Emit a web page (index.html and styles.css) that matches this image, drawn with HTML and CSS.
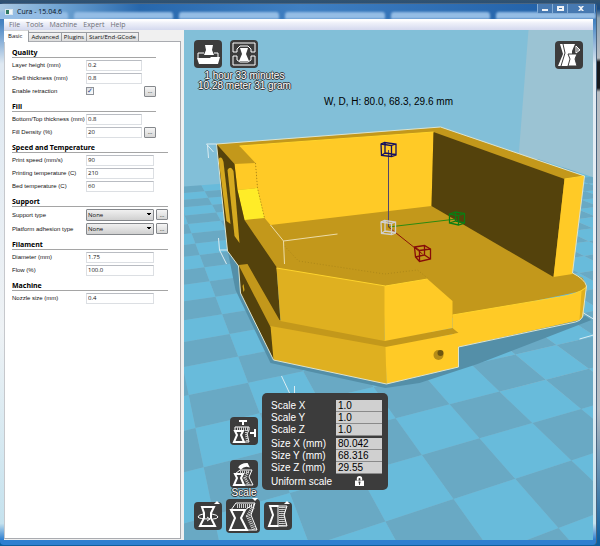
FILE: index.html
```
<!DOCTYPE html>
<html lang="en">
<head>
    <meta charset="UTF-8">
    <meta name="viewport" content="width=device-width, initial-scale=1.0">
    <title>Cura - 15.04.6</title>
    <link rel="stylesheet" href="styles.css">
</head>
<body>
    <div class="window">
        <header class="titlebar">
            <div class="behind-tabs" aria-hidden="true">
                <span></span><span></span><span></span><span></span><span></span><span></span>
            </div>
            <span class="app-icon"></span>
            <h1>Cura - 15.04.6</h1>
            <div class="window-buttons">
                <button type="button" aria-label="Minimize"><svg viewBox="0 0 14 10"><path d="M4 5h6v2H4z"/></svg></button>
                <button type="button" aria-label="Maximize"><svg viewBox="0 0 14 10"><path fill-rule="evenodd" d="M4 2h7v5H4zM6 4h3v1H6z"/></svg></button>
                <button type="button" class="close" aria-label="Close"><svg viewBox="0 0 14 10"><path d="M4 2h2l1 1 1-1h2L8 4.500l2 2.500H8L7 6 6 7H4l2-2.500z"/></svg></button>
            </div>
        </header>
        <nav class="menubar">
            <a href="#file">File</a>
            <a href="#tools">Tools</a>
            <a href="#machine">Machine</a>
            <a href="#expert">Expert</a>
            <a href="#help">Help</a>
        </nav>
        <main class="content">
            <aside class="settings">
                <div class="tabs">
                    <button type="button" class="active">Basic</button>
                    <button type="button">Advanced</button>
                    <button type="button">Plugins</button>
                    <button type="button">Start/End-GCode</button>
                </div>
                <form class="tab-page">
                    <section class="narrow">
                        <h2>Quality</h2>
                        <div class="row"><label for="layer">Layer height (mm)</label><input id="layer" type="text" value="0.2"></div>
                        <div class="row"><label for="shell">Shell thickness (mm)</label><input id="shell" type="text" value="0.8"></div>
                        <div class="row"><label for="retract">Enable retraction</label><input id="retract" type="checkbox" checked><button type="button">...</button></div>
                    </section>
                    <section class="narrow">
                        <h2>Fill</h2>
                        <div class="row"><label for="bottom">Bottom/Top thickness (mm)</label><input id="bottom" type="text" value="0.8"></div>
                        <div class="row"><label for="density">Fill Density (%)</label><input id="density" type="text" value="20"><button type="button">...</button></div>
                    </section>
                    <section>
                        <h2>Speed and Temperature</h2>
                        <div class="row"><label for="speed">Print speed (mm/s)</label><input id="speed" type="text" value="90"></div>
                        <div class="row"><label for="temp">Printing temperature (C)</label><input id="temp" type="text" value="210"></div>
                        <div class="row"><label for="bed">Bed temperature (C)</label><input id="bed" type="text" value="60"></div>
                    </section>
                    <section class="selects">
                        <h2>Support</h2>
                        <div class="row"><label for="support">Support type</label><select id="support"><option>None</option></select><button type="button">...</button></div>
                        <div class="row"><label for="adhesion">Platform adhesion type</label><select id="adhesion"><option>None</option></select><button type="button">...</button></div>
                    </section>
                    <section>
                        <h2>Filament</h2>
                        <div class="row"><label for="diameter">Diameter (mm)</label><input id="diameter" type="text" value="1.75"></div>
                        <div class="row"><label for="flow">Flow (%)</label><input id="flow" type="text" value="100.0"></div>
                    </section>
                    <section>
                        <h2>Machine</h2>
                        <div class="row"><label for="nozzle">Nozzle size (mm)</label><input id="nozzle" type="text" value="0.4"></div>
                    </section>
                </form>
            </aside>

            <div class="scene">
                <svg class="view3d" viewBox="184 30 410 510" preserveAspectRatio="xMidYMid slice">
                    <rect class="sky" x="-400" y="-400" width="1600" height="1600"/>
                    <path class="side-wall" d="M529 30H1200V400H500Z"/>
                    <path id="floor-light" class="floor-light"/>
                    <path id="floor-dark" class="floor-dark"/>

                    <path class="shadow" d="M228 250L236 290 271 363 386 388 420 383 478 364 530 344 592 320 586 316 459 344Z"/>

                    <!-- model -->
                    <path class="top" d="M217 144L441 127 585 176 573 273 583 278 587 285 587 290 453 318 385 300 277 272 245 222Z"/>
                    <path class="front" d="M240 146L434 132 432 206 271 225 265 218 258 188 256 163Z"/>
                    <path class="front" d="M235 164L256 163 258 188 238 190Z"/>
                    <path class="bright" d="M238 190L258 188 265 218 245 220Z"/>
                    <path class="inside" d="M434 132L565 179 554 277 432 206Z"/>
                    <path class="front" d="M565 179L585 176 573 274 554 277Z"/>
                    <path class="inside" d="M217 144L235 164 238 190 245 220 277 267 281 322 274 360 241 293 239 266 228 251Z"/>
                    <path class="slot" d="M219 159Q222 155 224 162L231 224 227 221Z"/>
                    <path class="slot" d="M228 170Q231 165 234 171L240 243 235 236Z"/>
                    <path class="slot" d="M243 286L244 284 245 290 244 292Z"/>
                    <path class="front" d="M453 315L560 297Q584 293 587 285L584 315Q583 320 576 321L459 347 453 334Z"/>
                    <path class="left" d="M582 291L587 287 583 317 580 320Z"/>
                    <path class="top" d="M239 265L248 264 280 320 385 340 453 328 459 333 387 348 271 327Z"/>
                    <path class="left" d="M277 268L386 286 385 341 281 321Z"/>
                    <path class="front" d="M385 286L428 279 453 301 453 328 385 341Z"/>
                    <path class="left" d="M271 326L387 347 387 384 274 360Z"/>
                    <path class="front" d="M386 347L459 333 459 367 387 384Z"/>
                    <path class="shine" d="M277 268L386 286 428 279M453 315L560 297Q578 294 586 288M240 146L434 132M565 179L585 176"/>
                    <ellipse cx="439" cy="355" rx="5" ry="5" fill="#b58c18"/>
                    <ellipse cx="441" cy="353" rx="3" ry="3" fill="#6d5510"/>
                    <path class="dots" d="M256 163L258 188 265 218M285 246L299 261 385 274 418 270 428 278"/>
                    <path class="outline" d="M228 251L217 144 441 127 585 176 573 273Q585 279 587 286L583 317Q581 321 576 322L459 347 459 367 387 384 274 360 241 293 239 266Z"/>

                    <!-- bounding box corners -->
                    <path class="corner" d="M217 144H207L214 152M208 145L209 158M219 238L220 250H228M220 250L227 264M282 376L290 393M295 386V395M584 313L594 319M580 339L594 335"/>
                    <path class="corner inner" d="M271 225L284 241 338 234M284 241L285 264"/>

                    <!-- scale handles -->
                    <path d="M389 150V227" stroke="#54466a"/>
                    <path d="M389 227L457 219" stroke="#2c8a10"/>
                    <path d="M389 227L423 254" stroke="#8a1408"/>
                    <g fill="none" stroke-width="1.300">
                        <path stroke="#15105f" d="M381.500 144L385 142.500 396.500 144V155L392 156.500 382 155.500ZM381.500 144L392 145.500V156.500M392 145.500L396.500 144M385.500 143V153L382 155.500M385.500 153L396 154.500"/>
                        <path stroke="#d0d0d0" d="M381.500 222L385 220.500 396 222V233L392 234.500 382 233.500ZM381.500 222L392 223.500V234.500M392 223.500L396 222M385.500 221V231L382 233.500M385.500 231L396 232.500"/>
                        <path stroke="#0b7d13" d="M450 214L456 212 465 213.500V223L459 225 450 223ZM450 214L459 215.500V225M459 215.500L465 213.500M456 212V221L450 223M456 221L465 223"/>
                        <path stroke="#860d09" d="M415 247L425 245.500 431 249V259L420 261.500 416 257ZM415 247L420 250.500V261.500M420 250.500L431 249M425 245.500V255L416 257M425 255L431 259"/>
                    </g>
                </svg>

                <div class="print-tools">
                    <div class="tool-row">
                        <button type="button" class="tool" aria-label="Load">
                            <svg viewBox="0 0 28 28"><path d="M11 5h8l-1 5 2 5H10l2-5z"/><path class="line thin" d="M4 18v-5h6M20 13h4v5"/><path d="M3 18h13l1-1h9l-2 7H5z"/></svg>
                        </button>
                        <button type="button" class="tool" aria-label="Toolpath to file">
                            <svg viewBox="0 0 28 28"><path class="line thin" d="M3 12V3h22v9h-4V9l-3-3h-8L7 9v3zM3 16v9h22v-9h-4v4l-3 2h-8l-3-2v-4z"/><path d="M10 8h8l-2 6 3 7H9l3-7z"/></svg>
                        </button>
                    </div>
                    <p>1 hour 33 minutes<br>10.28 meter 31 gram</p>
                </div>

                <button type="button" class="tool view-mode" aria-label="View mode">
                    <svg viewBox="0 0 28 28"><path d="M5 3h15l-3 7v3l3 4-2 8H3l5-12z"/><path class="cut" d="M8 3l2 9-4 13"/><path class="shape" d="M13 13h9l-2 5 2 7h-9l2-7z"/><path class="line thin" d="M21 5l4 4-4 3zM23 7v3"/></svg>
                </button>

                <p class="dimensions">W, D, H: 80.0, 68.3, 29.6 mm</p>

                <div class="scale-popup">
                    <div class="scale-tools">
                        <button type="button" class="tool" aria-label="To max">
                            <svg viewBox="0 0 28 28"><path class="line" d="M9 4h8M13 4v4M25 12v8M20 16h5"/><path class="line thin" d="M5 14v-4h14v3l-2 4 2 8h-4"/><path class="hatch" d="M7 11.500h11M16.500 13v4l1 8"/><path class="line" d="M5 14h8l-2 4 3 7H4l3-7z"/></svg>
                        </button>
                        <button type="button" class="tool" aria-label="Reset">
                            <svg viewBox="0 0 28 28"><path class="line" d="M9 8q2-4 8-4l1 2q-4-1-8 3"/><path class="line" d="M5 14h8l-2 4 3 7H4l3-7z"/><path class="line thin" d="M5 14l5-4h12l-3 7 4 8h-8"/><path class="hatch" d="M10 12h10M18 12l-3 6 4 7"/></svg>
                        </button>
                        <span class="tool-name">Scale</span>
                    </div>
                    <form class="scale-panel">
                        <label for="sx">Scale X</label><input id="sx" type="text" value="1.0">
                        <label for="sy">Scale Y</label><input id="sy" type="text" value="1.0">
                        <label for="sz">Scale Z</label><input id="sz" type="text" value="1.0">
                        <hr>
                        <label for="mx">Size X (mm)</label><input id="mx" type="text" value="80.042">
                        <label for="my">Size Y (mm)</label><input id="my" type="text" value="68.316">
                        <label for="mz">Size Z (mm)</label><input id="mz" type="text" value="29.55">
                        <span class="uniform">Uniform scale</span>
                        <button type="button" class="lock" aria-label="Uniform scale"><svg viewBox="0 0 10 12"><path fill="none" stroke="#fff" stroke-width="2" d="M3 5V3q0-2 2-2t2 2v2"/><path fill="#fff" d="M0 5h10v6H0z"/><path fill="#3c3c3c" d="M4 6h2v2H5.500v2h-1V8H4z"/></svg></button>
                    </form>
                </div>

                <div class="object-tools">
                    <button type="button" class="tool" aria-label="Rotate">
                        <svg viewBox="0 0 28 28"><path class="line" d="M8 5h12l-3 6v5l4 8H6l4-8v-5z"/><path class="line thin" d="M9 12q-5 1-5 3 1 2 12 2l-3-2M16 17l-3 2M18 12q6 1 6 3-1 2-5 2"/><path d="M20 2l3-3 3 3z"/></svg>
                    </button>
                    <button type="button" class="tool big" aria-label="Scale">
                        <svg viewBox="0 0 34 34"><path class="hatch wide" d="M11 7h17M27 8l-5 9 6 14"/><path class="line" d="M5 11h14l-4 8 6 12H4l5-12z"/><path class="line thin" d="M5 11l5-7h19l-4 12 6 15H21M19 11l7-5"/><path d="M26-1h6l-3 3z"/></svg>
                    </button>
                    <button type="button" class="tool" aria-label="Mirror">
                        <svg viewBox="0 0 28 28"><path class="line" d="M14 4H6l3 9-4 11h9"/><path class="hatch wide" d="M17 5v19M20 5l-1 8 2 11"/><path class="line thin" d="M14 3v22M14 4h9l-3 9 3 11h-9"/><path d="M20 2l3-3 3 3z"/></svg>
                    </button>
                </div>
            </div>
        </main>
    </div>
    <script src="floor.js"></script>
</body>
</html>
```
FILE: styles.css
```
* {
    box-sizing: border-box;
}

body {
    margin: 0;
    min-height: 100vh;
    display: flex;
    font-family: "Liberation Sans", Arial, sans-serif;
    background: linear-gradient(#33536f 0, #174a83 9px, #8fa4b5 18px, #b9bec3 58px, #17191d 62px, #17191d 88px, #b9bec3 92px, #b4bcc2 75%, #0e5f9e 99%);
}

h1, h2, p {
    margin: 0;
    font-weight: normal;
}

button, input, select {
    font-family: inherit;
    margin: 0;
    padding: 0;
}

.window {
    flex: 1;
    display: flex;
    flex-direction: column;
    margin: 3px 3px 1px 0;
    padding: 0 3px 5px 4px;
    border: 1px solid #4a6580;
    border-width: 1px 1px 0 0;
    border-radius: 4px;
    background: linear-gradient(#2a68ac 0, #4a86c4 20px, #dfe9f2 60px, #eef2f5 60%, #c5e2ee 96%, #2f7fd0 99%);
}

/* title bar */
.titlebar {
    position: relative;
    display: flex;
    align-items: center;
    height: 15px;
    margin: 0 -3px 0 -4px;
    padding-left: 5px;
    overflow: hidden;
    background: linear-gradient(90deg, #a9c9e3, #6ea3d2 60px, #2767ac 140px, #3f7fc2 300px, #1d5ca4);
}

.behind-tabs {
    position: absolute;
    inset: 8px 0 0 -32px;
    display: flex;
    gap: 6px;
    filter: blur(1px);
}

.behind-tabs span {
    flex: 1;
    border-radius: 3px 3px 0 0;
    background: #94bde5;
}

.app-icon {
    position: relative;
    width: 8px;
    height: 6px;
    border: 1px solid #d9e6ee;
    background: linear-gradient(90deg, #2f7a63 50%, #f2f6f8 50%);
}

.titlebar h1 {
    position: relative;
    margin-left: 4px;
    font: 7px/9px "Open Sans", sans-serif;
    color: #08121d;
}

.window-buttons {
    position: relative;
    display: flex;
    align-self: flex-start;
    margin-left: auto;
    margin-right: 1px;
    border: 1px solid #86aed6;
    border-top: 0;
    border-radius: 0 0 3px 3px;
}

.window-buttons button {
    display: flex;
    width: 15px;
    height: 9px;
    border: 0;
    border-right: 1px solid #86aed6;
    background: #4779b1;
}

.window-buttons .close {
    width: 26px;
    justify-content: center;
    border-right: 0;
}

.window-buttons svg {
    width: 14px;
    height: 10px;
    fill: #f0f3f6;
}

/* menu */
.menubar {
    display: flex;
    gap: 6px;
    height: 11px;
    padding-left: 5px;
    align-items: center;
    background: linear-gradient(#ffffff 1px, #eef0f9 4px, #d4d9ee);
}

.menubar a {
    font: 7px/9px "Open Sans", sans-serif;
    color: #6f7077;
    text-decoration: none;
}

.content {
    flex: 1;
    display: flex;
    background: #f0f0f0;
}

/* settings */
.settings {
    flex: 0 0 180px;
    display: flex;
    flex-direction: column;
    padding: 0 3px 1px 0;
    font-family: "Open Sans", sans-serif;
}

.tabs {
    display: flex;
    align-items: flex-end;
    height: 12px;
    margin-bottom: -1px;
}

.tabs button {
    height: 10px;
    padding: 0 2px;
    border: 1px solid #9a9da2;
    border-left: 0;
    background: linear-gradient(#f3f3f3, #dcdcdc);
    font-size: 6px;
    line-height: 8px;
    color: #111;
}

.tabs .active {
    position: relative;
    height: 12px;
    padding: 0 6px 2px 4px;
    border-bottom: 0;
    border-top-color: #d5d5d5;
    background: #fff;
}

.tab-page {
    flex: 1;
    display: flex;
    flex-direction: column;
    gap: 5px;
    padding: 6px 12px 6px 7px;
    border: 1px solid #a9abb0;
    border-left-color: #c6c8cc;
    background: #fff;
}

.tab-page section {
    display: flex;
    flex-direction: column;
    gap: 1px;
}

.narrow {
    margin-right: 12px;
}

.tab-page h2 {
    border-bottom: 1px solid #a5a5a5;
    font: bold 7px/9px "Noto Sans", sans-serif;
    color: #000;
}

.row {
    display: grid;
    grid-template-columns: 72px 1fr 12px;
    column-gap: 2px;
    align-items: center;
    height: 12px;
}

.selects .row {
    height: 13px;
}

.row label {
    font: 6px/8px "Liberation Sans", Arial, sans-serif;
    white-space: nowrap;
    color: #111;
}

.row input[type="text"] {
    width: 100%;
    height: 11px;
    padding: 0 1px;
    border: 1px solid #dcdfe3;
    border-top-color: #b9bcc2;
    font-size: 6px;
    color: #111;
}

.row input[type="checkbox"] {
    appearance: none;
    width: 8px;
    height: 8px;
    border: 1px solid #8e9298;
    background: linear-gradient(135deg, #d9dde2, #fff);
    color: #2a3f86;
}

.row input[type="checkbox"]:checked::before {
    content: "✓";
    display: block;
    font: bold 7px/6px "DejaVu Sans", sans-serif;
    text-align: center;
}

.row button {
    height: 11px;
    border: 1px solid #85888c;
    border-radius: 1px;
    background: linear-gradient(#f5f5f5, #d6d6d6);
    font-size: 6px;
    line-height: 6px;
}

.row select {
    appearance: none;
    width: 100%;
    height: 12px;
    padding: 0 1px;
    border: 1px solid #85888c;
    border-radius: 1px;
    background:
        linear-gradient(45deg, transparent 50%, #000 50%) right 4px center / 2px 3px no-repeat,
        linear-gradient(135deg, #000 50%, transparent 50%) right 2px center / 2px 3px no-repeat,
        linear-gradient(#f0f0f0, #d0d0d0);
    font-size: 6px;
    color: #111;
}

/* 3D view */
.scene {
    position: relative;
    flex: 1;
    min-width: 0;
    overflow: hidden;
    background: #82bfd8;
}

.view3d {
    position: absolute;
    inset: 0;
    width: 100%;
    height: 100%;
    fill: none;
}

.sky { fill: #82bfd8; }
.side-wall { fill: #9bc3d3; }
.floor-light { fill: #68bbdb; }
.floor-dark { fill: #69a9c4; }
.shadow { fill: #548fa8; }
.top { fill: #c3981b; }
.front { fill: #ffca26; }
.left { fill: #dfb020; }
.bright { fill: #ffec28; }
.slot { fill: #d6aa20; }
.inside { fill: #54420c; }
.shine { stroke: #ffd42c; }
.dots { stroke: #ae8818; stroke-dasharray: 1 2; }
.outline { stroke: #dce3cf; }
.corner { stroke: #d9ecf2; }
.inner { stroke: #ecdca8; }

.tool {
    display: block;
    width: 28px;
    height: 28px;
    border: 0;
    border-radius: 4px;
    background: #3c3c3c;
}

.tool svg {
    display: block;
    width: 100%;
    height: 100%;
    overflow: visible;
    fill: #fff;
}

.tool.big {
    width: 34px;
    height: 34px;
}

.tool .line {
    fill: none;
    stroke: #fff;
    stroke-width: 2;
}

.tool .thin {
    stroke-width: 1;
}

.tool .cut {
    fill: none;
    stroke: #3c3c3c;
}

.tool .shape {
    stroke: #3c3c3c;
}

.tool .hatch {
    fill: none;
    stroke: #ccc;
    stroke-width: 3;
    stroke-dasharray: 1 1;
}

.tool .wide {
    stroke-width: 4;
}

.print-tools {
    position: absolute;
    top: 10px;
    left: 10px;
}

.tool-row {
    display: flex;
    gap: 8px;
}

.print-tools p {
    margin-top: 3px;
    padding-left: 4px;
    font-size: 10px;
    line-height: 10px;
    text-align: center;
}

.print-tools p, .tool-name {
    color: #fff;
    text-shadow: 1px 0 #333, -1px 0 #333, 0 1px #333, 0 -1px #333;
}

.view-mode {
    position: absolute;
    top: 11px;
    right: 10px;
}

.dimensions {
    position: absolute;
    top: 66px;
    left: 0;
    right: 0;
    font-size: 10px;
    line-height: 12px;
    text-align: center;
    color: #000;
}

.scale-popup {
    position: absolute;
    left: 46px;
    bottom: 42px;
    display: flex;
    align-items: flex-end;
    gap: 4px;
}

.scale-tools {
    display: flex;
    flex-direction: column;
    width: 28px;
}

.scale-tools .tool + .tool {
    margin-top: 15px;
}

.tool-name {
    font-size: 10px;
    line-height: 10px;
    text-align: center;
}

.scale-panel {
    display: grid;
    grid-template-columns: 65px 46px;
    padding: 7px 6px 1px 9px;
    margin-bottom: 8px;
    border-radius: 5px;
    background: #3c3c3c;
    font-size: 10px;
    line-height: 12px;
    color: #fff;
}

.scale-panel input {
    width: 100%;
    height: 12px;
    padding: 0 2px;
    border: 0;
    border-bottom: 1px solid #8a8a8a;
    background: #d0d0d0;
    font-size: 10px;
    color: #000;
}

.scale-panel hr {
    grid-column: 1 / 3;
    width: 100%;
    height: 2px;
    margin: 0;
    border: 0;
}

.uniform {
    line-height: 15px;
}

.lock {
    justify-self: center;
    align-self: center;
    width: 9px;
    height: 11px;
    border: 0;
    background: none;
}

.lock svg {
    display: block;
    width: 100%;
    height: 100%;
}

.object-tools {
    position: absolute;
    left: 10px;
    bottom: 7px;
    display: flex;
    align-items: center;
    gap: 4px;
}
```
FILE: floor.js
```
// perspective projection of a platform grid point
function project(u, v) {
    const w = 1 - 0.08815 * u + 0.0425 * v;
    const x = (480 - 9.78 * u + 75.57 * v) / w;
    const y = (438.3 - 1.69 * u + 2.73 * v) / w;
    return x.toFixed(1) + ' ' + y.toFixed(1);
}

function cell(u, v) {
    return 'M' + project(u, v) + 'L' + project(u + 1, v) + 'L' +
        project(u + 1, v + 1) + 'L' + project(u, v + 1) + 'Z';
}

let light = '';
let dark = '';
for (let u = -18; u < 5; u++) {
    for (let v = -7; v < 14; v++) {
        if ((u + v) % 2 === 0) {
            light += cell(u, v);
        } else {
            dark += cell(u, v);
        }
    }
}
document.getElementById('floor-light').setAttribute('d', light);
document.getElementById('floor-dark').setAttribute('d', dark);
```
